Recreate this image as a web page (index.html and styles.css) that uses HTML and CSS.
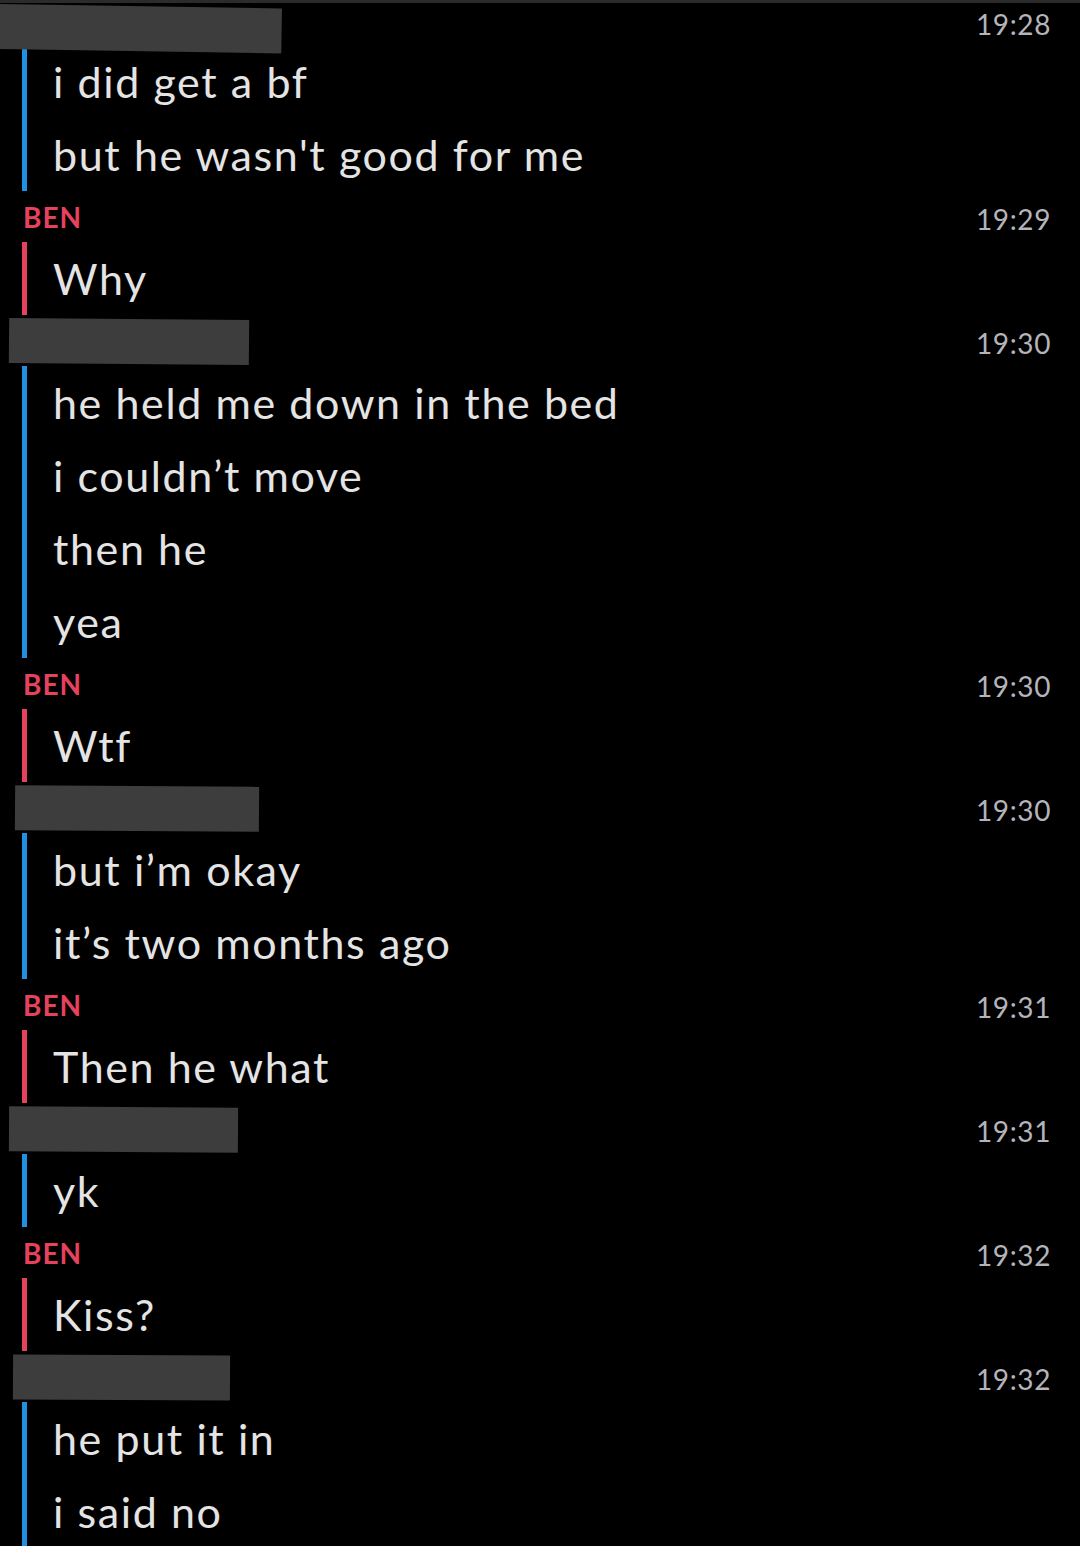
FILE: index.html
```html
<!DOCTYPE html>
<html>
<head>
    <link rel="stylesheet" href="styles.css">
</head>
<body>
    <div class="chat">
        <section class="group me first">
            <div class="head">
                <span class="redact r1"></span>
                <span class="time">19:28</span>
            </div>
            <div class="lines">
                <p>i did get a bf</p>
                <p>but he wasn't good for me</p>
            </div>
        </section>

        <section class="group them">
            <div class="head">
                <span class="name">BEN</span>
                <span class="time">19:29</span>
            </div>
            <div class="lines">
                <p>Why</p>
            </div>
        </section>

        <section class="group me">
            <div class="head">
                <span class="redact r2"></span>
                <span class="time">19:30</span>
            </div>
            <div class="lines">
                <p>he held me down in the bed</p>
                <p>i couldn’t move</p>
                <p>then he</p>
                <p>yea</p>
            </div>
        </section>

        <section class="group them">
            <div class="head">
                <span class="name">BEN</span>
                <span class="time">19:30</span>
            </div>
            <div class="lines">
                <p>Wtf</p>
            </div>
        </section>

        <section class="group me">
            <div class="head">
                <span class="redact r3"></span>
                <span class="time">19:30</span>
            </div>
            <div class="lines">
                <p>but i’m okay</p>
                <p>it’s two months ago</p>
            </div>
        </section>

        <section class="group them">
            <div class="head">
                <span class="name">BEN</span>
                <span class="time">19:31</span>
            </div>
            <div class="lines">
                <p>Then he what</p>
            </div>
        </section>

        <section class="group me">
            <div class="head">
                <span class="redact r4"></span>
                <span class="time">19:31</span>
            </div>
            <div class="lines">
                <p>yk</p>
            </div>
        </section>

        <section class="group them">
            <div class="head">
                <span class="name">BEN</span>
                <span class="time">19:32</span>
            </div>
            <div class="lines">
                <p>Kiss?</p>
            </div>
        </section>

        <section class="group me">
            <div class="head">
                <span class="redact r5"></span>
                <span class="time">19:32</span>
            </div>
            <div class="lines">
                <p>he put it in</p>
                <p>i said no</p>
            </div>
        </section>
    </div>
</body>
</html>
```

FILE: styles.css
```css
body {
    margin: 0;
    background: #000;
    font-family: Lato, "Open Sans", sans-serif;
    overflow: hidden;
}
.chat {
    border-top: 3px solid #2b2b2b;
}

/* name + time row */
.head {
    height: 51px;
    display: flex;
    align-items: center;
    justify-content: space-between;
    padding-right: 29px;
}
.first .head {
    height: 42px;
}
.name {
    margin-left: 23px;
    color: #e5425d;
    font-size: 28px;
    font-weight: 700;
    letter-spacing: 1px;
}
.time {
    margin-top: 5px;
    color: #b4b4ba;
    font-size: 28px;
    letter-spacing: 0.6px;
}
.first .time {
    margin-top: 0;
}

/* blacked out names */
.redact {
    height: 45px;
    background: #3d3d3d;
}
.r1 { width: 282px; margin-top: 4px; transform: rotate(0.9deg); transform-origin: left top; }
.r2 { width: 240px; margin-left: 9px; margin-top: 2px; transform: rotate(0.5deg); }
.r3 { width: 244px; margin-left: 15px; margin-top: 1px; transform: rotate(0.4deg); }
.r4 { width: 229px; margin-left: 9px; margin-top: 2px; transform: rotate(0.4deg); }
.r5 { width: 217px; margin-left: 13px; margin-top: 1px; transform: rotate(0.3deg); }

/* message lines with the coloured bar */
.lines {
    margin-left: 22px;
    padding-left: 26px;
    border-left: 5px solid #2090e0;
}
.them .lines {
    border-left-color: #e5425d;
}
.lines p {
    margin: 0;
    height: 73px;
    line-height: 73px;
    font-size: 43px;
    letter-spacing: 1.6px;
    color: #e4e4e4;
}
```
